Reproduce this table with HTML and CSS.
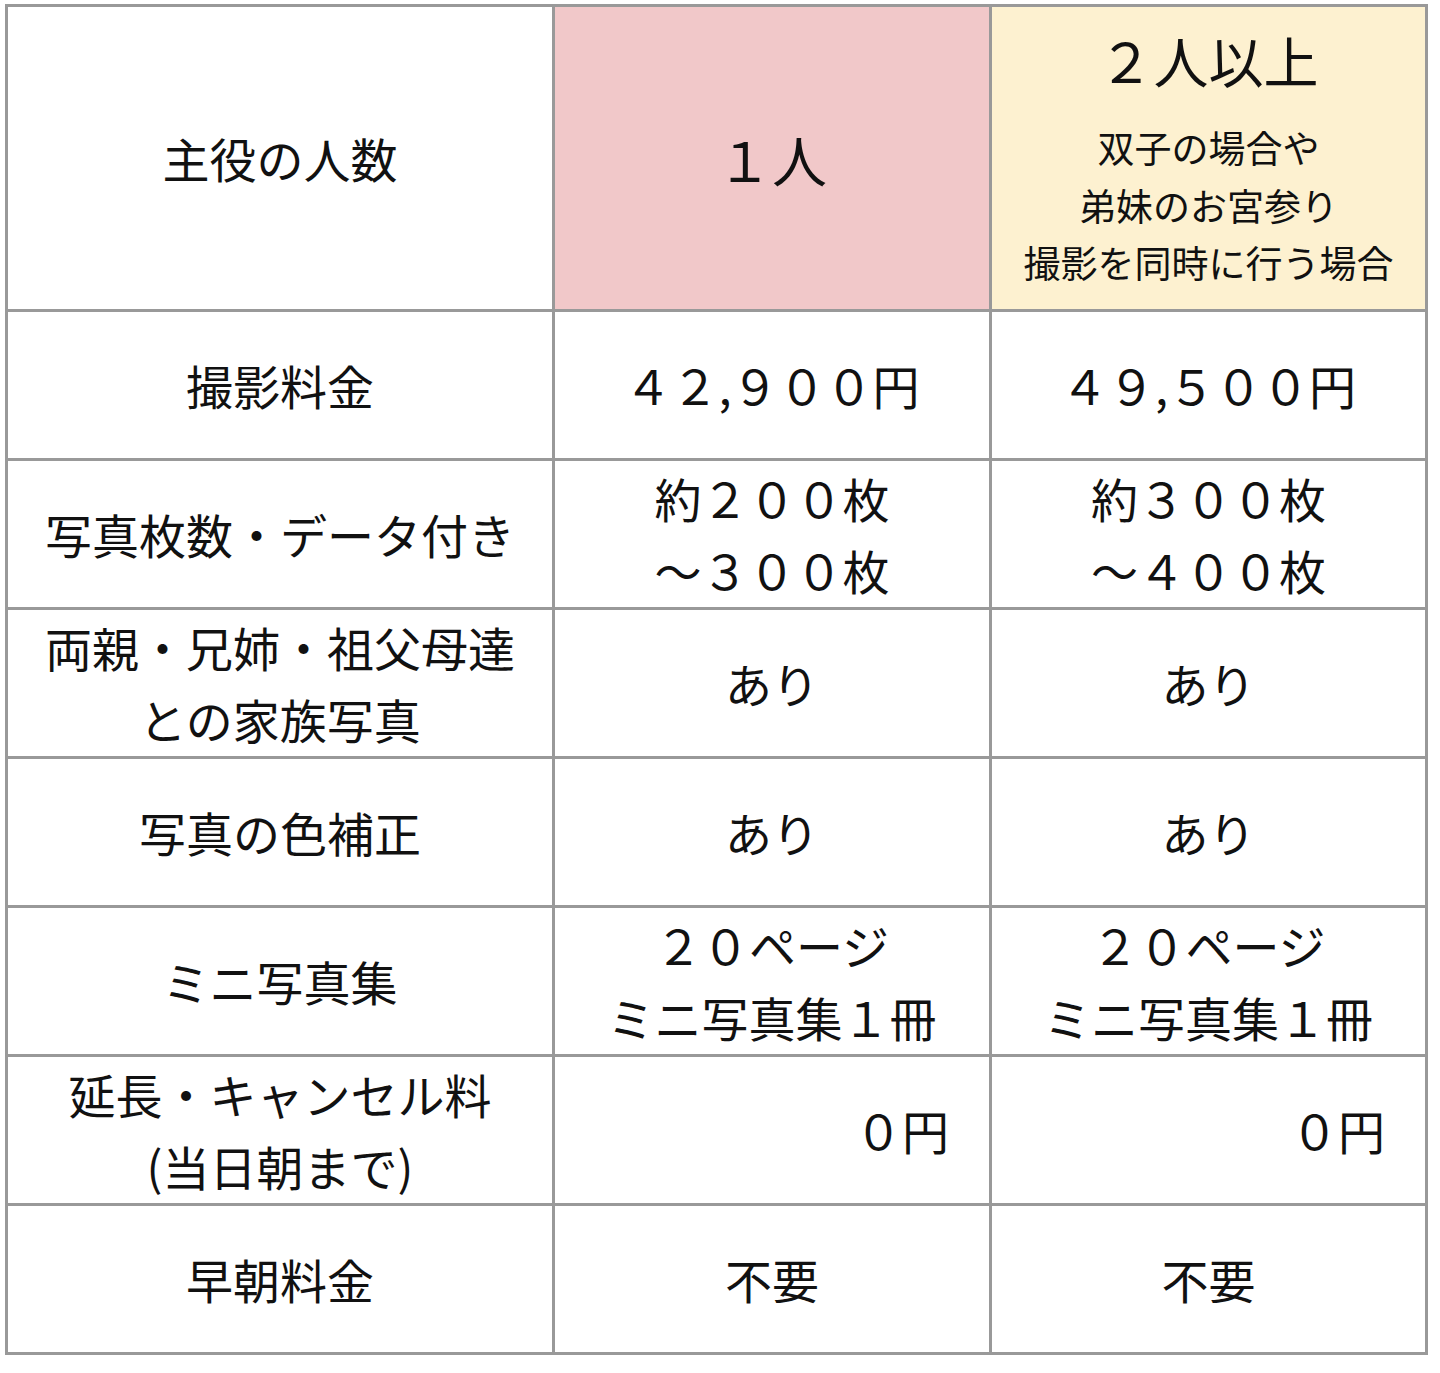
FILE: index.html
```html
<!DOCTYPE html>
<html lang="ja">
<head>
<meta charset="utf-8">
<title>料金表</title>
<link rel="stylesheet" href="styles.css">
</head>
<body>
<div class="table">
  <div class="cell label head-label">主役の人数</div>
  <div class="cell head pink"><div class="title">１人</div></div>
  <div class="cell head cream">
    <div class="title">２人以上</div>
    <div class="sub">双子の場合や<br>弟妹のお宮参り<br>撮影を同時に行う場合</div>
  </div>

  <div class="cell label">撮影料金</div>
  <div class="cell">４２,９００円</div>
  <div class="cell">４９,５００円</div>

  <div class="cell label">写真枚数・データ付き</div>
  <div class="cell multi">約２００枚<br>～３００枚</div>
  <div class="cell multi">約３００枚<br>～４００枚</div>

  <div class="cell label multi">両親・兄姉・祖父母達<br>との家族写真</div>
  <div class="cell">あり</div>
  <div class="cell">あり</div>

  <div class="cell label">写真の色補正</div>
  <div class="cell">あり</div>
  <div class="cell">あり</div>

  <div class="cell label">ミニ写真集</div>
  <div class="cell multi">２０ページ<br>ミニ写真集１冊</div>
  <div class="cell multi">２０ページ<br>ミニ写真集１冊</div>

  <div class="cell label multi">延長・キャンセル料<br>(当日朝まで)</div>
  <div class="cell right">０円</div>
  <div class="cell right">０円</div>

  <div class="cell label">早朝料金</div>
  <div class="cell">不要</div>
  <div class="cell">不要</div>
</div>
</body>
</html>
```

FILE: styles.css
```css
html, body {
  margin: 0;
  padding: 0;
  background: #ffffff;
}

body {
  font-family: "Noto Sans CJK JP", "Noto Sans", sans-serif;
  color: #111111;
}

.table {
  display: grid;
  grid-template-columns: 544px 434px 433px;
  grid-template-rows: 302px repeat(7, 146px);
  gap: 3px;
  padding: 3px;
  background: #999999;
  width: max-content;
  margin: 4px 0 0 5px;
}

.cell {
  background: #ffffff;
  display: flex;
  flex-direction: column;
  align-items: center;
  justify-content: center;
  text-align: center;
  font-size: 47px;
  line-height: 72px;
  white-space: nowrap;
}

.cell.right {
  align-items: flex-end;
  text-align: right;
  padding-right: 40px;
}

.head.pink {
  background: #f1c8c9;
}

.head.cream {
  background: #fdf1d0;
}

.head .title {
  font-size: 55px;
  line-height: 70px;
}

.head .sub {
  font-size: 37px;
  line-height: 57.5px;
  margin-top: 25px;
}
```
